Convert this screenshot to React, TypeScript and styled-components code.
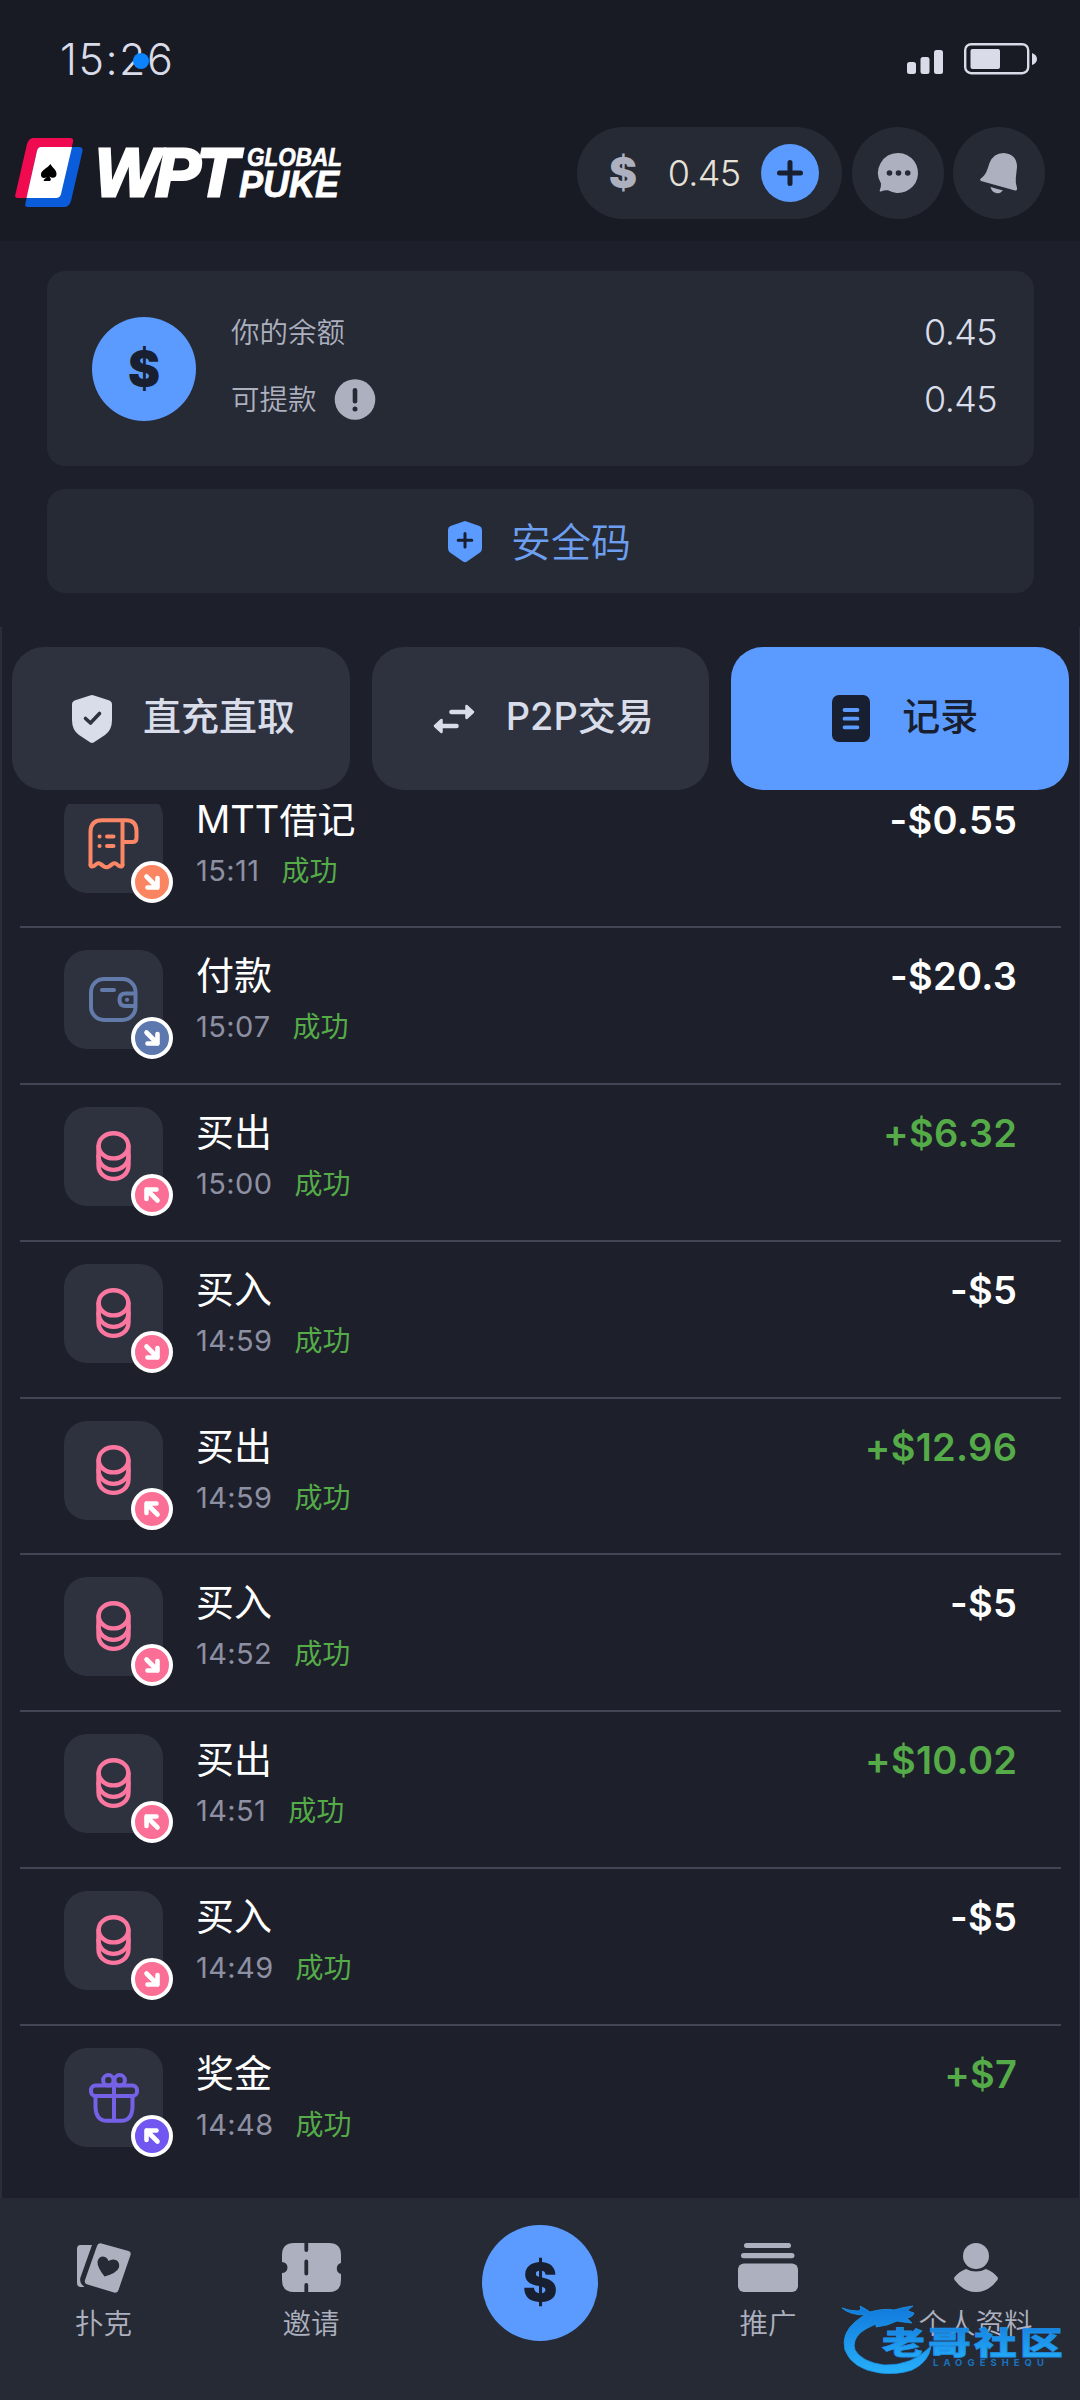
import React, { FC, ReactNode } from 'react';
import styled, { createGlobalStyle } from 'styled-components';

const Color = {
  Header: '#181a24',
  Page: '#1d1f2a',
  Panel: '#262a35',
  Raised: '#2e323f',
  Line: '#424554',
  Blue: '#5b9bff',
  Ink: '#181f31',
  Muted: '#adb0bf',
  Light: '#d8dde9',
  Green: '#54ab48',
};

const GlobalStyle = createGlobalStyle`
  * {
    box-sizing: border-box;
  }
  body {
    margin: 0;
    background: ${Color.Page};
    font-family: Inter, 'Noto Sans CJK SC', sans-serif;
  }
  svg {
    display: block;
    flex: none;
    overflow: visible;
  }
`;

const Screen = styled.div`
  display: flex;
  flex-direction: column;
  width: 1080px;
  height: 2400px;
  overflow: hidden;
  background: ${Color.Page};
`;

const Header = styled.header`
  height: 241px;
  background: ${Color.Header};
`;

const StatusBar = styled.div`
  display: flex;
  align-items: center;
  justify-content: space-between;
  height: 117px;
  padding: 0 43px 0 60px;
`;

const Clock = styled.div`
  position: relative;
  color: #d9dbe8;
  font-size: 43px;
  font-weight: 300;
  letter-spacing: 1.5px;
  line-height: 50px;
`;

const ClockDot = styled.span`
  position: absolute;
  left: 73px;
  top: 19px;
  width: 16px;
  height: 16px;
  border-radius: 50%;
  background: #0c84ff;
`;

const TopBar = styled.div`
  display: flex;
  align-items: center;
  gap: 9px;
  height: 112px;
  padding: 0 35px 0 15px;
`;

const LogoBox = styled.div`
  flex: 1;
`;

const BalancePill = styled.div`
  display: flex;
  align-items: center;
  width: 265px;
  height: 92px;
  margin-right: 1px;
  padding: 0 23px 0 32px;
  border-radius: 46px;
  background: ${Color.Panel};
`;

const PillAmount = styled.span`
  flex: 1;
  padding-left: 10px;
  text-align: center;
  color: #e6e2d8;
  font-size: 36px;
  font-weight: 300;
  letter-spacing: -0.7px;
`;

const Round = styled.div<{ size: number; tone: string }>`
  display: flex;
  flex: none;
  align-items: center;
  justify-content: center;
  width: ${props => props.size}px;
  height: ${props => props.size}px;
  border-radius: 50%;
  background: ${props => props.tone};
`;

const Dollar = styled.span<{ size: number; tone: string }>`
  color: ${props => props.tone};
  font-size: ${props => props.size}px;
  font-weight: 900;
  line-height: 1;
`;

const Wallet = styled.section`
  display: flex;
  flex-direction: column;
  gap: 23px;
  height: 386px;
  padding: 30px 46px 0 47px;
`;

const BalanceCard = styled.div`
  display: flex;
  gap: 35px;
  height: 195px;
  padding: 46px 37px 0 45px;
  border-radius: 18px;
  background: ${Color.Panel};
`;

const BalanceLines = styled.div`
  display: flex;
  flex: 1;
  flex-direction: column;
  gap: 27px;
  margin-top: -5px;
`;

const BalanceLine = styled.div`
  display: flex;
  align-items: center;
  height: 40px;
  color: ${Color.Muted};

  svg {
    margin-left: 18px;
  }
`;

const BalanceLabel = styled.span`
  padding-bottom: 3px;
  font-size: 28.5px;
  font-weight: 350;
`;

const BalanceValue = styled.span`
  margin-left: auto;
  color: ${Color.Light};
  font-size: 36px;
  font-weight: 300;
  letter-spacing: -0.6px;
`;

const SafetyButton = styled.div`
  display: flex;
  align-items: center;
  justify-content: center;
  gap: 29px;
  height: 104px;
  padding-right: 2px;
  border-radius: 18px;
  background: ${Color.Panel};
  color: #6d9ff0;
  font-size: 40px;
  font-weight: 350;
`;

const SafetyLabel = styled.span`
  padding-bottom: 3px;
`;

const Records = styled.section`
  display: flex;
  flex-direction: column;
  height: 1571px;
  border: solid #2b2e3a;
  border-width: 0 1px 0 2px;
`;

const Tabs = styled.div`
  display: grid;
  grid-template-columns: repeat(3, 1fr);
  gap: 22px;
  padding: 20px 10px 14px;
`;

const Tab = styled.div<{ $active?: boolean; $gap: number; $shift: number }>`
  display: flex;
  align-items: center;
  gap: ${props => props.$gap}px;
  height: 143px;
  padding-left: ${props => props.$shift}px;
  border-radius: 32px;
  background: ${props => (props.$active ? Color.Blue : Color.Raised)};
  color: ${props => (props.$active ? Color.Ink : Color.Light)};
  font-size: 38px;
  font-weight: 500;
  white-space: nowrap;
`;

const TabLabel = styled.span`
  padding-bottom: 11px;
`;

const List = styled.div`
  flex: 1;
  min-height: 0;
  overflow: hidden;
  padding: 0 18px;
`;

// the list is scrolled a little, so the first row is cut by the tabs
const Scrolled = styled.div`
  margin-top: -32px;
`;

const Row = styled.div`
  display: flex;
  height: 156.9px;
  padding: 22px 44px 0 44px;
  border-bottom: 2px solid ${Color.Line};

  &:first-child {
    height: 155.9px;
  }

  &:last-child {
    border-bottom: none;
  }
`;

const Tile = styled.div`
  position: relative;
  display: flex;
  align-items: center;
  justify-content: center;
  width: 99px;
  height: 99px;
  border-radius: 23px;
  background: ${Color.Raised};
`;

const Badge = styled.div<{ tone: string }>`
  position: absolute;
  left: 67px;
  top: 67px;
  display: flex;
  align-items: center;
  justify-content: center;
  width: 42px;
  height: 42px;
  border: 4px solid #fff;
  border-radius: 50%;
  background: ${props => props.tone};
`;

const RowText = styled.div`
  flex: 1;
  margin-left: 33px;
`;

const Title = styled.div`
  height: 53px;
  color: #fff;
  font-size: 38px;
  line-height: 50px;
`;

const Meta = styled.div`
  display: flex;
  gap: 22px;
  color: #8d90a2;
  font-size: 29px;
  font-kerning: none;
  line-height: 48px;
`;

const Time = styled.span`
  letter-spacing: 0.4px;
`;

const Success = styled.span`
  color: ${Color.Green};
  font-size: 28px;
`;

const Amount = styled.div<{ $gain: boolean }>`
  margin-right: -0.3px;
  color: ${props => (props.$gain ? Color.Green : '#fff')};
  font-size: 38px;
  font-weight: 600;
  letter-spacing: 0.3px;
  line-height: 52px;
`;

const Nav = styled.nav`
  position: relative;
  display: grid;
  grid-template-columns: 207px 208px 250px 206px 209px;
  height: 202px;
  background: ${Color.Panel};
`;

const NavItem = styled.div`
  display: flex;
  flex-direction: column;
  align-items: center;
  gap: 11px;
  padding-top: 45px;
  color: ${Color.Muted};
  font-size: 28.5px;
  font-weight: 350;
  line-height: 40px;
`;

const NavCenter = styled.div`
  display: flex;
  justify-content: center;
  padding-top: 27px;
`;

const Watermark = styled.div`
  position: absolute;
  left: 840px;
  top: 102px;
`;

const Stroke: FC<{
  width: number;
  height: number;
  color: string;
  weight?: number;
  children: ReactNode;
}> = ({ width, height, color, weight = 4, children }) => (
  <svg
    width={width}
    height={height}
    viewBox={`0 0 ${width} ${height}`}
    fill="none"
    stroke={color}
    strokeWidth={weight}
    strokeLinecap="round"
    strokeLinejoin="round"
  >
    {children}
  </svg>
);

const Logo = () => (
  <svg width="330" height="70" viewBox="15 138 330 70">
    <path
      d="M33 138 H70 Q74 138 73 142 L60 194 Q59 198 55 198 H18 Q14 198 15.500 194 L27 144 Q29 138 33 138Z"
      fill="#f00a50"
    />
    <path
      d="M41 147 H79 Q83 147 82.500 151 L71 201 Q69 207 64 207 H28 Q24 207 25.500 203 L37 151 Q38 147 41 147Z"
      fill="#0a5cdb"
    />
    <path
      d="M41 147 H72 L61 194 Q60 198 56 198 H26.500 L37 151 Q38 147 41 147Z"
      fill="#fff"
    />
    <path
      d="M50.500 164 C52.500 168 57 170 56.500 174.500 C56 178.500 52 178.500 49.500 176.500 L51 179.500 L50 181 H44 L43.500 180 L47 177 C44 179 40.500 178 41 174 C41.500 170 47 168.500 50.500 164Z"
      fill="#000"
    />
    <g
      fill="#fff"
      stroke="#fff"
      fontFamily="'Liberation Sans', sans-serif"
      fontStyle="italic"
      fontWeight="700"
    >
      <text x="95" y="196" fontSize="68" strokeWidth="3" textLength="143" lengthAdjust="spacing">
        WPT
      </text>
      <text x="247" y="165.500" fontSize="25" strokeWidth="0.600" textLength="95" lengthAdjust="spacingAndGlyphs">
        GLOBAL
      </text>
      <text x="239" y="196.500" fontSize="36.500" strokeWidth="0.800" textLength="100" lengthAdjust="spacingAndGlyphs">
        PUKE
      </text>
    </g>
  </svg>
);

const StatusIcons = () => (
  <svg width="130" height="32" viewBox="907 43 130 32">
    <g fill="#d9dbe8">
      <rect x="907" y="62" width="9" height="12" rx="2.500" />
      <rect x="920.500" y="57" width="9" height="17" rx="2.500" />
      <rect x="934" y="50" width="9" height="24" rx="2.500" />
      <rect x="970.500" y="49" width="29.500" height="20" rx="2" />
      <path d="M1032 53 Q1037 55 1037 59 Q1037 63 1032 65Z" />
    </g>
    <rect
      x="965.200"
      y="44.200"
      width="63"
      height="29"
      rx="6"
      fill="none"
      stroke="#d9dbe8"
      strokeWidth="2.400"
    />
  </svg>
);

const ChatIcon = () => (
  <svg width="41" height="40" viewBox="0 0 41 40">
    <path
      d="M20.500 0 A20 20 0 1 1 10 37.300 Q6.500 37 3 38.500 Q1 38.800 1.800 37 Q3.200 33.500 3 30.500 A20 20 0 0 1 20.500 0Z"
      fill={Color.Muted}
    />
    <g fill={Color.Panel}>
      <circle cx="11.500" cy="20" r="2.800" />
      <circle cx="20.500" cy="20" r="2.800" />
      <circle cx="29.700" cy="20" r="2.800" />
    </g>
  </svg>
);

const BellIcon = () => (
  <svg width="38" height="40" viewBox="0 0 38 40" fill={Color.Muted}>
    <path d="M1 28 Q-1 26.500 1.500 25 Q5.500 22 7.500 16 L9.500 10 Q13.500 0 23.500 0 Q37 1 37 14 L35.800 25 Q35.300 29 37 35 Q37.500 38 35 37.500Z" />
    <path d="M10.500 34 L23 37.500 Q20 41 16 40 Q11.500 38.800 10.500 34Z" />
  </svg>
);

const InfoIcon = () => (
  <svg width="40" height="41" viewBox="0 0 40 41">
    <circle cx="20" cy="20.500" r="20.300" fill={Color.Muted} />
    <rect x="17.700" y="9" width="4.600" height="15.500" rx="2.300" fill={Color.Panel} />
    <circle cx="20" cy="30" r="2.500" fill={Color.Panel} />
  </svg>
);

const SafetyIcon = () => (
  <svg width="34" height="41" viewBox="0 0 34 41">
    <path
      d="M15.500 0.500 Q17 -0.300 18.500 0.500 L31.500 5 Q34 6 34 9 V27 Q34 30 32 31.500 L19 40.500 Q17 42 15 40.500 L2 31.500 Q0 30 0 27 V9 Q0 6 2.500 5Z"
      fill={Color.Blue}
    />
    <path d="M17 12.500 V26 M10.200 19.200 H23.800" stroke={Color.Ink} strokeWidth="3" strokeLinecap="round" />
  </svg>
);

const ShieldIcon = () => (
  <svg width="40" height="48" viewBox="0 0 40 48">
    <path
      d="M18 0.500 Q20 -0.300 22 0.500 L37.500 5.500 Q40 6.500 40 9 V25 Q40 35 33 40 L22 47.300 Q20 48.500 18 47.300 L7 40 Q0 35 0 25 V9 Q0 6.500 2.500 5.500Z"
      fill={Color.Light}
    />
    <path
      d="M13.500 23.500 L18.500 28 L27.500 18.500"
      fill="none"
      stroke={Color.Raised}
      strokeWidth="3.600"
      strokeLinecap="round"
      strokeLinejoin="round"
    />
  </svg>
);

const SwapIcon = () => (
  <svg width="42" height="30" viewBox="0 0 42 30">
    <path
      d="M18.500 8 H34 M23.500 22 H8"
      stroke={Color.Light}
      strokeWidth="4.600"
      strokeLinecap="round"
    />
    <path
      d="M33.500 2 L40 8 L33.500 14Z M8.500 16 L2 22 L8.500 28Z"
      fill={Color.Light}
      stroke={Color.Light}
      strokeWidth="2.500"
      strokeLinejoin="round"
    />
  </svg>
);

const RecordIcon = () => (
  <svg width="38" height="47" viewBox="0 0 38 47">
    <rect width="38" height="47" rx="7" fill={Color.Ink} />
    <path
      d="M12.500 15 H25.500 M12.500 23.700 H25.500 M12.500 32.300 H25.500"
      stroke={Color.Blue}
      strokeWidth="3.800"
      strokeLinecap="round"
    />
  </svg>
);

const ReceiptIcon = () => (
  <Stroke width={51} height={51} color="#fb8767">
    <path d="M2.500 47 V14 Q2.500 2.200 14 2.200 H38 Q48.500 2.200 48.500 13 V20 Q48.500 24 44.500 24 H35" />
    <path d="M34.500 47 V3" />
    <path d="M2.500 47 Q3 49.500 6 48 L8.500 46 Q10.500 44.500 12.500 46 L16 48.500 Q18.500 50 21 48.500 L24.500 46 Q26.500 44.500 28.500 46 L31 48 Q34 49.500 34.500 47" />
    <path d="M11.500 18.500 H11.600 M19 18.500 H25.500 M11.500 28 H11.600 M19 28 H25.500" />
  </Stroke>
);

const WalletIcon = () => (
  <Stroke width={49} height={45} color="#637bab">
    <rect x="2" y="2" width="44.500" height="41" rx="13" />
    <path d="M13 13 H25" />
    <path d="M46 16.500 H36.500 Q30.500 16.500 30.500 22.700 Q30.500 29 36.500 29 H46" />
    <path d="M38 22.700 H38.100" />
  </Stroke>
);

const CoinsIcon = () => (
  <Stroke width={35} height={51} color="#fb779f" weight={4.4}>
    <ellipse cx="17.500" cy="14.800" rx="14.800" ry="12.600" />
    <path d="M2.500 15 V34 C2.500 52.500 32.500 52.500 32.500 34 V15" />
    <path d="M2.500 25 C3.500 43.500 31.500 43.500 32.500 25" />
  </Stroke>
);

const GiftIcon = () => (
  <Stroke width={50} height={50} color="#7461e6">
    <rect x="2" y="12.500" width="46" height="10.500" rx="4.500" />
    <path d="M6.500 23 V34 Q7 47.800 18 47.800 H32 Q43 47.800 43.500 34 V23" />
    <path d="M25 7 V47.500" />
    <circle cx="19.300" cy="7.300" r="5.200" />
    <circle cx="30.700" cy="7.300" r="5.200" />
  </Stroke>
);

const BadgeArrow: FC<{ up: boolean }> = ({ up }) => (
  <Stroke width={16} height={16} color="#fff" weight={4.6}>
    <path
      d="M2.500 2.500 L13.500 13.500 M13.500 4 V13.500 H3.500"
      transform={up ? 'rotate(180 8 8)' : undefined}
    />
  </Stroke>
);

const PokerIcon = () => (
  <svg width="54" height="50" viewBox="0 0 54 50">
    <g fill={Color.Muted}>
      <path d="M3.500 2 H15 L3.300 35 Q2 40 7.500 44 H4 Q0 44 0 40 V6 Q0 2 3.500 2Z" />
      <path d="M24.500 0.500 L51.500 8 Q54.500 9 53.500 12 L41.500 47 Q40.500 50.500 37 49.500 L10.500 41.500 Q7 40.500 8 37 L20 3 Q21 -0.500 24.500 0.500Z" />
    </g>
    <path
      d="M27.500 33.500 Q20 24 20.500 18.500 Q22 13 27 13.700 Q30.500 14.500 31.500 18 Q35 15.500 39 17 Q43 19 42 24.500 Q40 30 27.500 33.500Z"
      fill={Color.Panel}
    />
  </svg>
);

const TicketIcon = () => (
  <svg width="59" height="50" viewBox="0 0 59 50">
    <path
      d="M12 0 H47 Q59 0 59 12 V20 A5.700 5.700 0 0 0 59 31 V37 Q59 49 47 49 H12 Q0 49 0 37 V30 A5.500 5.500 0 0 0 0 19 V12 Q0 0 12 0Z"
      fill={Color.Muted}
    />
    <path
      d="M24.300 -2 V7 M24.300 18.500 V30.500 M24.300 42 V51"
      stroke={Color.Panel}
      strokeWidth="3.800"
      strokeLinecap="round"
    />
  </svg>
);

const PromoIcon = () => (
  <svg width="60" height="50" viewBox="0 0 60 50" fill={Color.Muted}>
    <rect x="6" width="47" height="5" rx="2.500" />
    <rect x="3" y="10" width="53.500" height="5.200" rx="2.600" />
    <rect y="20.500" width="60" height="28.500" rx="6" />
  </svg>
);

const ProfileIcon = () => (
  <svg width="44" height="50" viewBox="0 0 44 50" fill={Color.Muted}>
    <circle cx="22" cy="13" r="13" />
    <path d="M0.600 37 Q-0.400 35.500 0.600 34 Q5 28.500 12 26 Q22 31 32 26 Q39 28.500 43.400 34 Q44.400 35.500 43.400 37 Q34.500 49 22 49 Q9.500 49 0.600 37Z" />
  </svg>
);

const CommunityMark = () => (
  <svg width="230" height="80" viewBox="840 2300 230 80">
    <defs>
      <linearGradient id="mark" x1="0" y1="0" x2="0" y2="1">
        <stop offset="0" stopColor="#1179dc" />
        <stop offset="1" stopColor="#27b0fa" />
      </linearGradient>
    </defs>
    <path
      d="M842 2308 Q850 2311 858 2311 Q862 2310 860 2306 Q866 2309 870 2312 Q884 2308 894 2310 Q904 2307 913 2306 Q908 2309 908 2311 L914 2313 Q913 2317 907 2318 L912 2323 Q902 2322 897 2321 Q892 2323 887 2325 L876 2327 L876 2324 Q866 2328 860 2333 Q852 2341 855 2350 Q862 2362 884 2365 Q912 2366 931 2346 Q929 2362 912 2370 Q898 2375 880 2373 Q852 2369 845 2350 Q841 2334 855 2322 Q861 2317 865 2315 Q850 2315 842 2308Z"
      fill="url(#mark)"
      stroke="#1c95ec"
      strokeWidth="0.800"
    />
    <text
      transform="translate(882 2354) scale(1.380 1)"
      fontFamily="'Noto Sans CJK SC', sans-serif"
      fontWeight="900"
      fontSize="31"
      fill="url(#mark)"
      stroke="#1e90e8"
      strokeWidth="0.800"
      textLength="131"
      lengthAdjust="spacing"
    >
      老哥社区
    </text>
    <text
      x="933"
      y="2366"
      fontFamily="Inter, sans-serif"
      fontWeight="700"
      fontSize="9.500"
      fill="#1a72bd"
      textLength="111"
      lengthAdjust="spacing"
    >
      LAOGESHEQU
    </text>
  </svg>
);

type Kind = 'debit' | 'payment' | 'coins' | 'bonus';

const kinds: Record<Kind, { icon: ReactNode; tone: string }> = {
  debit: { icon: <ReceiptIcon />, tone: '#fb8461' },
  payment: { icon: <WalletIcon />, tone: '#5c78ae' },
  coins: { icon: <CoinsIcon />, tone: '#fb6f96' },
  bonus: { icon: <GiftIcon />, tone: '#7157f0' },
};

interface Entry {
  kind: Kind;
  title: string;
  time: string;
  amount: string;
  up?: boolean;
}

const entries: Entry[] = [
  { kind: 'debit', title: 'MTT借记', time: '15:11', amount: '-$0.55' },
  { kind: 'payment', title: '付款', time: '15:07', amount: '-$20.3' },
  { kind: 'coins', title: '买出', time: '15:00', amount: '+$6.32', up: true },
  { kind: 'coins', title: '买入', time: '14:59', amount: '-$5' },
  { kind: 'coins', title: '买出', time: '14:59', amount: '+$12.96', up: true },
  { kind: 'coins', title: '买入', time: '14:52', amount: '-$5' },
  { kind: 'coins', title: '买出', time: '14:51', amount: '+$10.02', up: true },
  { kind: 'coins', title: '买入', time: '14:49', amount: '-$5' },
  { kind: 'bonus', title: '奖金', time: '14:48', amount: '+$7', up: true },
];

const EntryRow: FC<{ entry: Entry }> = ({
  entry: { kind, title, time, amount, up = false },
}) => (
  <Row>
    <Tile>
      {kinds[kind].icon}
      <Badge tone={kinds[kind].tone}>
        <BadgeArrow up={up} />
      </Badge>
    </Tile>
    <RowText>
      <Title>{title}</Title>
      <Meta>
        <Time>{time}</Time>
        <Success>成功</Success>
      </Meta>
    </RowText>
    <Amount $gain={amount.startsWith('+')}>{amount}</Amount>
  </Row>
);

const App: FC = () => (
  <Screen>
    <GlobalStyle />
    <Header>
      <StatusBar>
        <Clock>
          15:26
          <ClockDot />
        </Clock>
        <StatusIcons />
      </StatusBar>
      <TopBar>
        <LogoBox>
          <Logo />
        </LogoBox>
        <BalancePill>
          <Dollar size={42} tone={Color.Muted}>
            $
          </Dollar>
          <PillAmount>0.45</PillAmount>
          <Round size={58} tone={Color.Blue}>
            <Stroke width={26} height={26} color={Color.Ink} weight={5}>
              <path d="M13 2.500 V23.500 M2.500 13 H23.500" />
            </Stroke>
          </Round>
        </BalancePill>
        <Round size={92} tone={Color.Panel}>
          <ChatIcon />
        </Round>
        <Round size={92} tone={Color.Panel}>
          <BellIcon />
        </Round>
      </TopBar>
    </Header>
    <Wallet>
      <BalanceCard>
        <Round size={104} tone={Color.Blue}>
          <Dollar size={48} tone={Color.Ink}>
            $
          </Dollar>
        </Round>
        <BalanceLines>
          <BalanceLine>
            <BalanceLabel>你的余额</BalanceLabel>
            <BalanceValue>0.45</BalanceValue>
          </BalanceLine>
          <BalanceLine>
            <BalanceLabel>可提款</BalanceLabel>
            <InfoIcon />
            <BalanceValue>0.45</BalanceValue>
          </BalanceLine>
        </BalanceLines>
      </BalanceCard>
      <SafetyButton>
        <SafetyIcon />
        <SafetyLabel>安全码</SafetyLabel>
      </SafetyButton>
    </Wallet>
    <Records>
      <Tabs>
        <Tab $gap={31} $shift={60}>
          <ShieldIcon />
          <TabLabel>直充直取</TabLabel>
        </Tab>
        <Tab $gap={31} $shift={61}>
          <SwapIcon />
          <TabLabel>P2P交易</TabLabel>
        </Tab>
        <Tab $active $gap={32} $shift={101}>
          <RecordIcon />
          <TabLabel>记录</TabLabel>
        </Tab>
      </Tabs>
      <List>
        <Scrolled>
          {entries.map((entry, index) => (
            <EntryRow entry={entry} key={index} />
          ))}
        </Scrolled>
      </List>
    </Records>
    <Nav>
      <NavItem>
        <PokerIcon />
        扑克
      </NavItem>
      <NavItem>
        <TicketIcon />
        邀请
      </NavItem>
      <NavCenter>
        <Round size={116} tone={Color.Blue}>
          <Dollar size={52} tone={Color.Ink}>
            $
          </Dollar>
        </Round>
      </NavCenter>
      <NavItem>
        <PromoIcon />
        推广
      </NavItem>
      <NavItem>
        <ProfileIcon />
        个人资料
      </NavItem>
      <Watermark>
        <CommunityMark />
      </Watermark>
    </Nav>
  </Screen>
);

export default App;
